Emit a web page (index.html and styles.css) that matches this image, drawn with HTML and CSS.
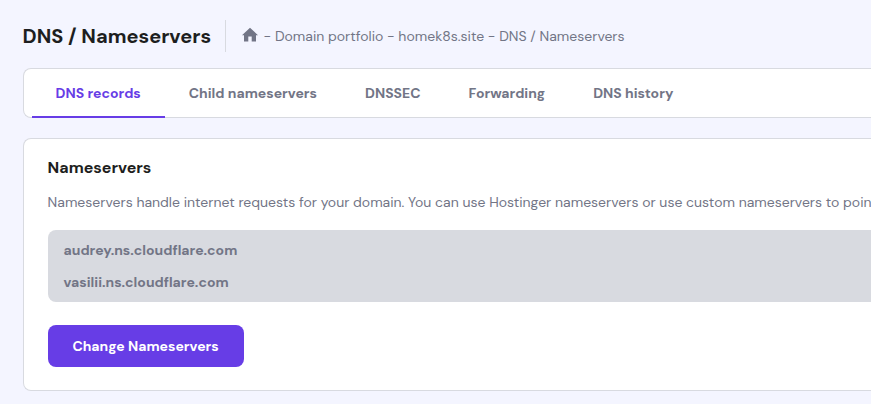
FILE: index.html
```html
<!DOCTYPE html>
<html lang="en">
<head>
<meta charset="utf-8">
<title>DNS / Nameservers</title>
<link rel="stylesheet" href="styles.css">
</head>
<body>
<header class="page-header">
  <h1 class="title">DNS / Nameservers</h1>
  <nav class="breadcrumb">
    <svg class="home" viewBox="0 0 16 15" width="16" height="15"><path d="M6.3 14.4V9.6h3.4v4.8H14V8.2h2L8 .7 0 8.2h2v6.2z"/></svg>
    <span>- Domain portfolio - homek8s.site - DNS / Nameservers</span>
  </nav>
</header>
<nav class="tabs">
  <a class="tab active">DNS records</a>
  <a class="tab">Child nameservers</a>
  <a class="tab">DNSSEC</a>
  <a class="tab">Forwarding</a>
  <a class="tab">DNS history</a>
</nav>
<section class="card">
  <h2 class="heading">Nameservers</h2>
  <p class="desc">Nameservers handle internet requests for your domain. You can use Hostinger nameservers or use custom nameservers to poin</p>
  <ul class="servers">
    <li>audrey.ns.cloudflare.com</li>
    <li>vasilii.ns.cloudflare.com</li>
  </ul>
  <button class="button">Change Nameservers</button>
</section>
</body>
</html>
```
FILE: styles.css
```css
* { box-sizing: border-box; }
body {
  margin: 0;
  height: 404px;
  padding: 20px 0 0 22.6px;
  overflow: hidden;
  background: #f4f5ff;
  color: #727586;
  font-family: "DM Sans", "Open Sans", sans-serif;
  font-size: 14px;
  line-height: 24px;
  white-space: nowrap;
}
h1, h2, p, ul { margin: 0; padding: 0; }
.page-header { display: flex; height: 32px; align-items: center; }
.title { width: 203px; height: 32px; border-right: 1px solid #d8dae0; color: #1d1e20; font-size: 20px; line-height: 32px; font-weight: 700; }
.breadcrumb { display: flex; align-items: center; gap: 6px; padding-left: 16px; }
.home { margin-bottom: 3px; fill: #727586; }
.tabs { display: flex; height: 50px; margin-top: 16px; padding: 0 8px; border: 1px solid #d8dae0; border-right: 0; border-radius: 8px 0 0 8px; background: #fff; }
.tab { height: 49px; padding: 12px 24px; font-weight: 700; }
.active { color: #673de6; border-bottom: 2px solid #673de6; }
.card { height: 253px; margin-top: 20px; padding: 17px 0 24px 24px; border: 1px solid #d8dae0; border-right: 0; border-radius: 8px 0 0 8px; background: #fff; }
.heading { color: #1d1e20; font-size: 16px; line-height: 24px; }
.desc { margin-top: 10px; }
.servers { height: 72px; margin-top: 16px; padding: 8px 16px; border-radius: 8px 0 0 8px; background: #d8dae0; font-weight: 700; list-style: none; }
.servers li { height: 32px; }
.button { width: 196px; height: 42px; margin-top: 23px; padding: 0; border: 0; border-radius: 8px; background: #673de6; color: #fff; font: 700 14px/24px "DM Sans", "Open Sans", sans-serif; }
```
